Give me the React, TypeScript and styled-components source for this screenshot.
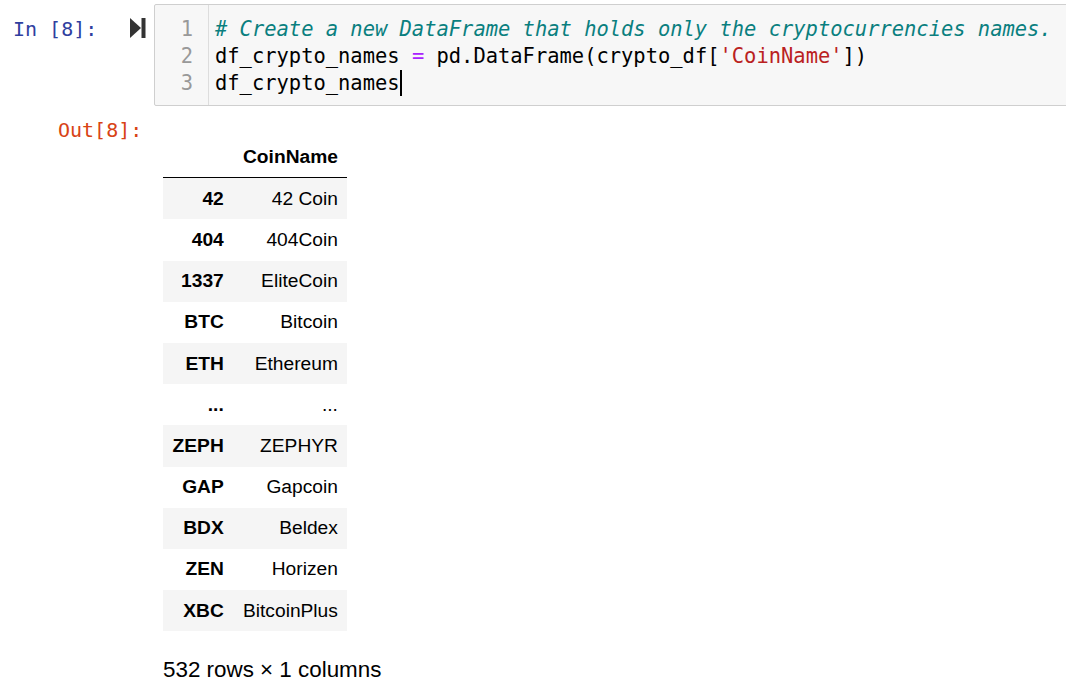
import React from "react";
import styled, { createGlobalStyle } from "styled-components";

const Global = createGlobalStyle`
  html, body { margin: 0; padding: 0; background: #fff; }
  body { font-family: "Liberation Sans", Arial, sans-serif; color: #000; }
`;

const Notebook = styled.div`
  display: flex;
  flex-direction: column;
  width: 1066px;
  height: 696px;
  overflow: hidden;
`;

const CellRow = styled.div<{ $top?: number }>`
  display: flex;
  align-items: flex-start;
  margin-top: ${(p) => p.$top ?? 0}px;
`;

const Prompt = styled.div<{ $color: string; $padTop: number }>`
  width: 154px;
  flex: none;
  display: flex;
  align-items: flex-start;
  box-sizing: border-box;
  padding-top: ${(p) => p.$padTop}px;
  font-family: "DejaVu Sans Mono", "Liberation Mono", monospace;
  font-size: 20px;
  line-height: 27px;
  color: ${(p) => p.$color};
  white-space: pre;
`;

const InLabel = styled.span`
  margin-left: 13px;
`;

const OutLabel = styled.span`
  margin-left: 58px;
`;

const RunIcon = styled.svg`
  margin-left: 33px;
  margin-top: 2px;
  width: 16px;
  height: 20px;
`;

const CodeBox = styled.div`
  flex: none;
  width: 1000px;
  margin-top: 4px;
  display: flex;
  border: 1px solid #cfcfcf;
  border-radius: 2px;
  background: #f7f7f7;
  font-family: "DejaVu Sans Mono", "Liberation Mono", monospace;
  font-size: 20.45px;
  line-height: 27px;
`;

const Gutter = styled.div`
  width: 54px;
  flex: none;
  box-sizing: border-box;
  border-right: 1px solid #dddddd;
  padding: 11px 15px 8px 0;
  text-align: right;
  color: #999999;
`;

const Lines = styled.div`
  padding: 11px 0 8px 6px;
  white-space: pre;
  color: #000;
`;

const Line = styled.div`
  height: 27px;
`;

const Comment = styled.span`
  color: #0a7f7f;
  font-style: italic;
`;
const Op = styled.span`
  color: #aa22ff;
`;
const Str = styled.span`
  color: #ba2121;
`;
const Cursor = styled.span`
  display: inline-block;
  width: 2px;
  height: 26px;
  background: #000;
  vertical-align: -6px;
`;

const OutputArea = styled.div`
  display: flex;
  flex-direction: column;
  align-items: flex-start;
  padding-left: 9px;
`;

const Table = styled.table`
  margin-top: 23px;
  border-collapse: collapse;
  border-spacing: 0;
  font-size: 19.2px;
  color: #000;
`;

const HeadCell = styled.th`
  padding: 9.6px;
  text-align: right;
  font-weight: bold;
  line-height: normal;
  border-bottom: 1px solid #000;
  vertical-align: middle;
`;

const Row = styled.tr<{ $striped: boolean }>`
  background: ${(p) => (p.$striped ? "#f5f5f5" : "transparent")};
`;

const IndexCell = styled.th`
  padding: 9.6px;
  text-align: right;
  font-weight: bold;
  line-height: normal;
  vertical-align: middle;
`;

const DataCell = styled.td`
  padding: 9.6px;
  text-align: right;
  line-height: normal;
  vertical-align: middle;
`;

const Footer = styled.div`
  margin-top: 25.6px;
  font-size: 22.4px;
  line-height: normal;
  color: #000;
`;

const rows: [string, string][] = [
  ["42", "42 Coin"],
  ["404", "404Coin"],
  ["1337", "EliteCoin"],
  ["BTC", "Bitcoin"],
  ["ETH", "Ethereum"],
  ["...", "..."],
  ["ZEPH", "ZEPHYR"],
  ["GAP", "Gapcoin"],
  ["BDX", "Beldex"],
  ["ZEN", "Horizen"],
  ["XBC", "BitcoinPlus"],
];

export default function App() {
  return (
    <>
      <Global />
      <Notebook>
        <CellRow>
          <Prompt $color="#303f9f" $padTop={16}>
            <InLabel>In [8]:</InLabel>
            <RunIcon viewBox="0 0 16 20">
              <path d="M0 0 L11 10 L0 20 Z" fill="#333" />
              <rect x="11.5" y="0" width="4" height="20" fill="#333" />
            </RunIcon>
          </Prompt>
          <CodeBox>
            <Gutter>
              <Line>1</Line>
              <Line>2</Line>
              <Line>3</Line>
            </Gutter>
            <Lines>
              <Line>
                <Comment># Create a new DataFrame that holds only the cryptocurrencies names.</Comment>
              </Line>
              <Line>
                df_crypto_names <Op>=</Op> pd.DataFrame(crypto_df[<Str>'CoinName'</Str>])
              </Line>
              <Line>
                df_crypto_names
                <Cursor />
              </Line>
            </Lines>
          </CodeBox>
        </CellRow>
        <CellRow $top={7}>
          <Prompt $color="#d84315" $padTop={4}>
            <OutLabel>Out[8]:</OutLabel>
          </Prompt>
          <OutputArea>
            <Table>
              <thead>
                <tr>
                  <HeadCell></HeadCell>
                  <HeadCell>CoinName</HeadCell>
                </tr>
              </thead>
              <tbody>
                {rows.map(([idx, name], i) => (
                  <Row key={idx + i} $striped={i % 2 === 0}>
                    <IndexCell>{idx}</IndexCell>
                    <DataCell>{name}</DataCell>
                  </Row>
                ))}
              </tbody>
            </Table>
            <Footer>532 rows × 1 columns</Footer>
          </OutputArea>
        </CellRow>
      </Notebook>
    </>
  );
}
